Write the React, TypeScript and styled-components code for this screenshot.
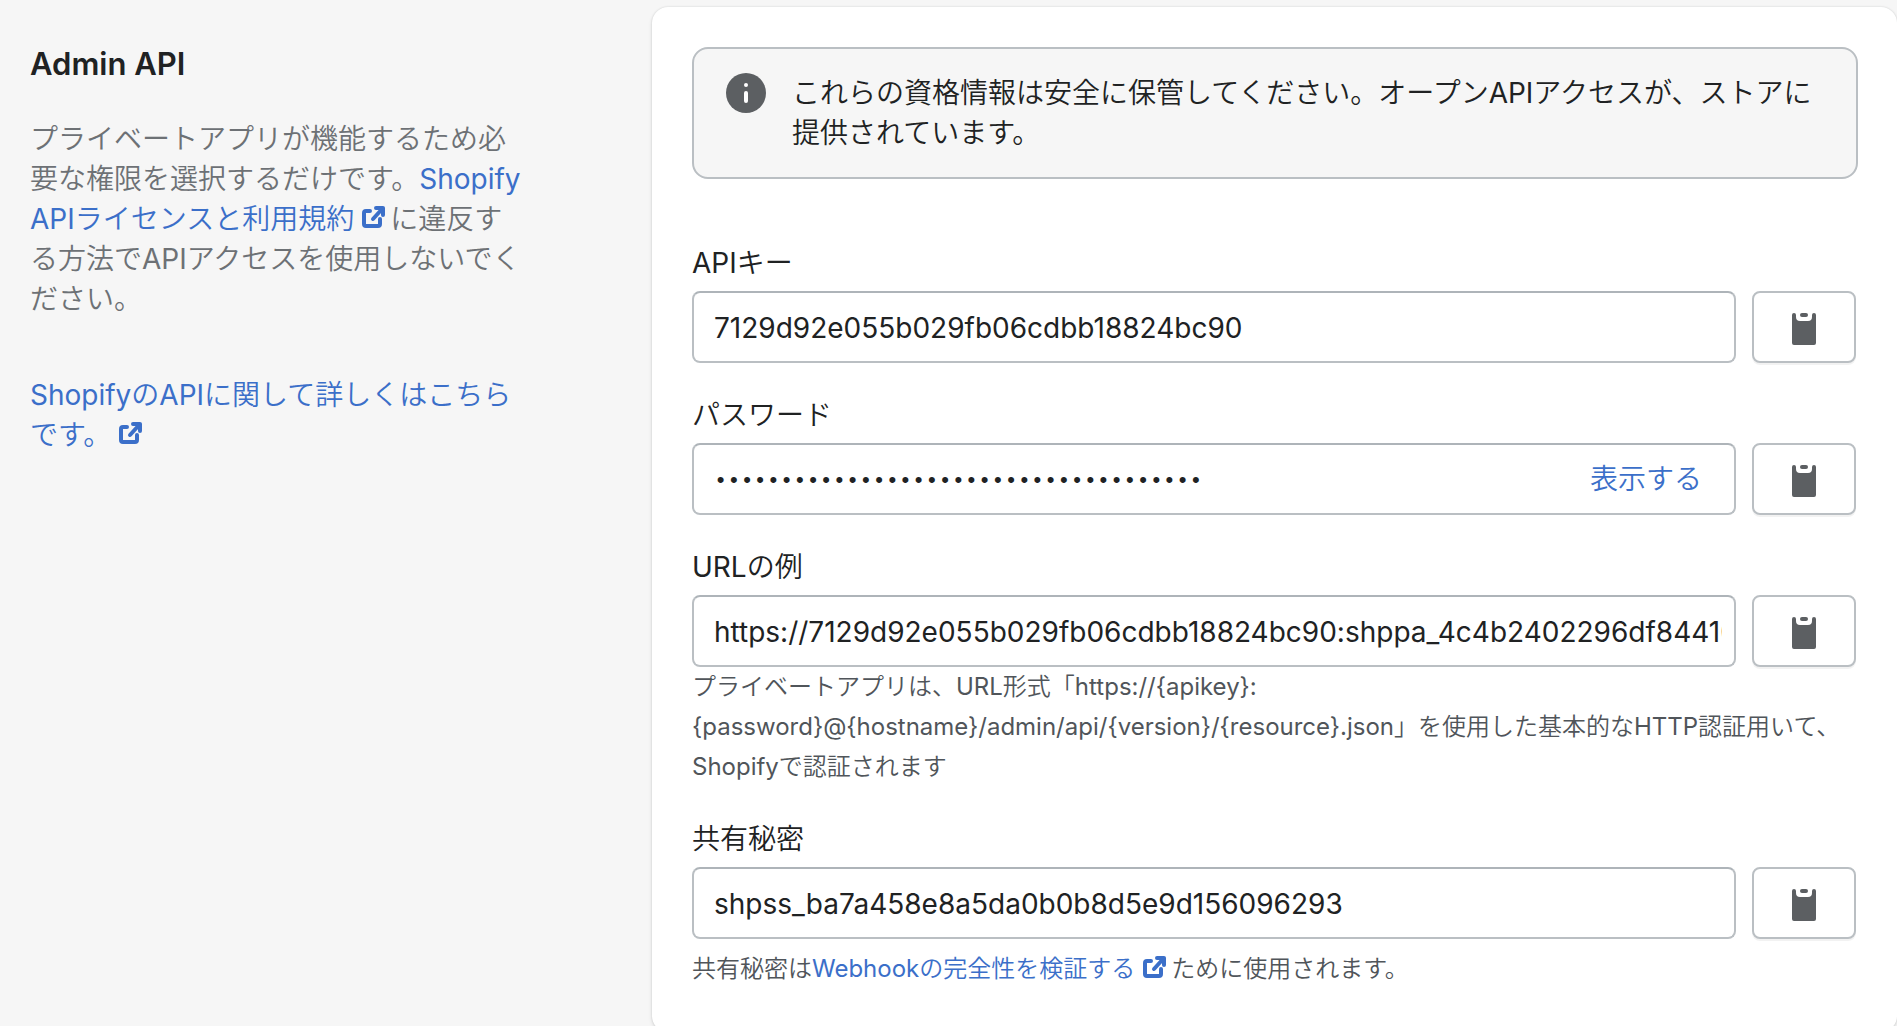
import React, { useId, useState } from "react";
import styled, { createGlobalStyle } from "styled-components";

const GlobalStyle = createGlobalStyle`
  *, *::before, *::after { box-sizing: border-box; }
  html { scrollbar-width: none; }
  body {
    margin: 0;
    background: #f6f6f6;
    color: #202223;
    font-family: Inter, "Noto Sans CJK JP DemiLight", "Noto Sans CJK JP", sans-serif;
    font-size: 28px;
    line-height: 40px;
    overflow-x: hidden;
  }
`;

const Page = styled.main`
  display: flex;
  align-items: flex-start;
  padding: 7px 0 8px 30px;
`;

const Summary = styled.section`
  flex: 0 0 622px;
  padding: 32px 124px 0 0;
`;

const Heading = styled.h2`
  margin: 0 0 30px;
  font-size: 31px;
  font-weight: 600;
  line-height: 50px;
`;

const Description = styled.p`
  margin: 0 0 56px;
  color: #6d7175;
`;

const Link = styled.a`
  color: #3b6fc9;
  text-decoration: none;
`;

const LinkIcon = styled.svg`
  width: 36px;
  height: 40px;
  vertical-align: top;
`;

const Card = styled.section`
  flex: 1;
  min-width: 0;
  padding: 40px 39px 43px 40px;
  border-radius: 16px;
  background: #fff;
  box-shadow: 0 0 2px rgba(23, 24, 24, 0.15), 0 2px 4px rgba(0, 0, 0, 0.1);
`;

const Notice = styled.div`
  display: flex;
  gap: 24px;
  margin-bottom: 64px;
  padding: 24px 30px;
  border: 2px solid #babfc3;
  border-radius: 16px;
  background: #f6f6f6;
`;

const NoticeIcon = styled.svg`
  flex: none;
  width: 44px;
  height: 44px;
`;

const Form = styled.form`
  display: flex;
  flex-direction: column;
  gap: 32px;
  padding-right: 2px;
`;

const Label = styled.label`
  display: block;
  margin-bottom: 8px;
`;

const Row = styled.div`
  display: flex;
  gap: 16px;
`;

const TextBox = styled.div`
  display: flex;
  flex: 1;
  min-width: 0;
  height: 72px;
  padding: 0 12px 0 20px;
  border: 2px solid #babfc3;
  border-top-color: #aeb4b9;
  border-radius: 8px;
  background: #fff;
`;

const Input = styled.input`
  flex: 1;
  min-width: 0;
  padding: 2px 0 0;
  border: 0;
  outline: 0;
  background: none;
  color: inherit;
  font: inherit;

  &[type="password"] {
    padding-top: 6px;
    font-family: "Liberation Mono", monospace;
    font-size: 22px;
  }
`;

const RevealButton = styled.button`
  padding: 0 20px;
  border: 0;
  background: none;
  color: #3b6fc9;
  font: inherit;
`;

const CopyButton = styled.button`
  display: flex;
  align-items: center;
  justify-content: center;
  flex: 0 0 104px;
  padding: 4px 0 0;
  border: 2px solid #babfc3;
  border-radius: 8px;
  background: #fff;
  box-shadow: 0 2px 0 rgba(0, 0, 0, 0.05);
`;

const HelpText = styled.p<{ $spaced?: boolean }>`
  margin: ${(p) => (p.$spaced ? "10px" : "0")} 0 0;
  color: #50555a;
  font-size: 24px;
`;

const ExternalIcon = () => (
  <LinkIcon
    viewBox="0 0 36 40"
    fill="none"
    stroke="currentColor"
    strokeWidth="4"
    strokeLinecap="round"
    strokeLinejoin="round"
    aria-hidden="true"
  >
    <path d="M16 12H12a2 2 0 0 0-2 2V25a2 2 0 0 0 2 2H24a2 2 0 0 0 2-2V20" />
    <path d="M22 9h7v7M29 9L19 20" />
  </LinkIcon>
);

const ClipboardIcon = () => (
  <svg width="24" height="32" viewBox="0 0 24 32" fill="#5c5f62" aria-hidden="true">
    <path d="M2 0a2 2 0 0 1 2 2v2a4 4 0 0 0 4 4h8a4 4 0 0 0 4-4V2a2 2 0 0 1 4 0v28a2 2 0 0 1-2 2H2a2 2 0 0 1-2-2V2a2 2 0 0 1 2-2z" />
    <rect x="8" y="0" width="8" height="4" rx="2" />
  </svg>
);

type FieldProps = {
  label: string;
  value: string;
  secret?: boolean;
  children?: React.ReactNode;
};

const Field = ({ label, value, secret, children }: FieldProps) => {
  const id = useId();
  const [shown, setShown] = useState(!secret);
  return (
    <div>
      <Label htmlFor={id}>{label}</Label>
      <Row>
        <TextBox>
          <Input id={id} type={shown ? "text" : "password"} value={value} readOnly />
          {secret && (
            <RevealButton type="button" onClick={() => setShown(!shown)}>
              表示する
            </RevealButton>
          )}
        </TextBox>
        <CopyButton
          type="button"
          aria-label={`${label}をコピー`}
          onClick={() => navigator.clipboard?.writeText(value)}
        >
          <ClipboardIcon />
        </CopyButton>
      </Row>
      {children}
    </div>
  );
};

export default function App() {
  return (
    <>
      <GlobalStyle />
      <Page lang="ja">
        <Summary>
          <Heading>Admin API</Heading>
          <Description>
            プライベートアプリが機能するため必要な権限を選択するだけです。
            <Link href="#terms">
              Shopify APIライセンスと利用規約
              <ExternalIcon />
            </Link>
            に違反する方法でAPIアクセスを使用しないでください。
          </Description>
          <Description>
            <Link href="#docs">
              ShopifyのAPIに関して詳しくはこちらです。
              <ExternalIcon />
            </Link>
          </Description>
        </Summary>
        <Card>
          <Notice>
            <NoticeIcon viewBox="0 0 44 44" aria-hidden="true">
              <circle cx="22" cy="20" r="20" fill="#5c5f62" />
              <circle cx="22" cy="12" r="2" fill="#fff" />
              <rect x="20" y="18" width="4" height="12" rx="2" fill="#fff" />
            </NoticeIcon>
            <span>
              これらの資格情報は安全に保管してください。オープンAPIアクセスが、ストアに提供されています。
            </span>
          </Notice>
          <Form>
            <Field label="APIキー" value="7129d92e055b029fb06cdbb18824bc90" />
            <Field label="パスワード" value="shppa_4c4b2402296df8441a05b7e9d3c2f18" secret />
            <Field
              label="URLの例"
              value="https://7129d92e055b029fb06cdbb18824bc90:shppa_4c4b2402296df84410"
            >
              <HelpText>
                プライベートアプリは、URL形式「https://&#123;apikey&#125;:
                &#123;password&#125;@&#123;hostname&#125;/admin/api/&#123;version&#125;/&#123;resource&#125;.json」を使用した基本的なHTTP認証用いて、Shopifyで認証されます
              </HelpText>
            </Field>
            <Field label="共有秘密" value="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">
              <HelpText $spaced>
                共有秘密は
                <Link href="#webhook">
                  Webhookの完全性を検証する
                  <ExternalIcon />
                </Link>
                ために使用されます。
              </HelpText>
            </Field>
          </Form>
        </Card>
      </Page>
    </>
  );
}
